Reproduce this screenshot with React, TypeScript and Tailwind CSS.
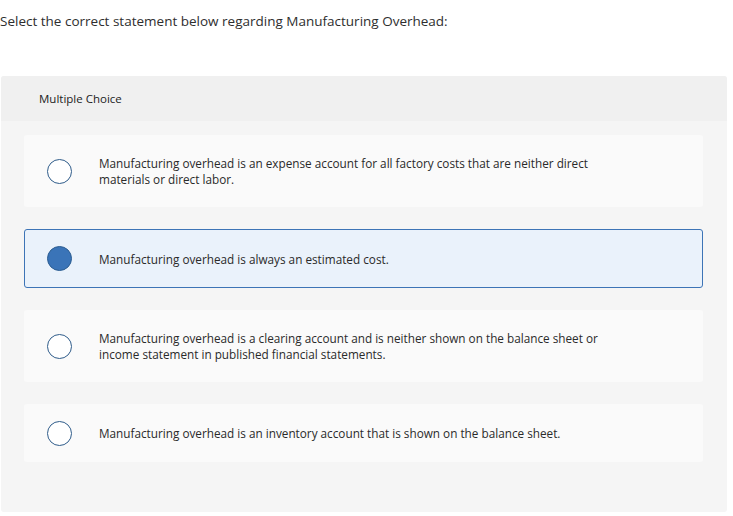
import React from 'react';

const options = [
  'Manufacturing overhead is an expense account for all factory costs that are neither direct materials or direct labor.',
  'Manufacturing overhead is always an estimated cost.',
  'Manufacturing overhead is a clearing account and is neither shown on the balance sheet or income statement in published financial statements.',
  'Manufacturing overhead is an inventory account that is shown on the balance sheet.',
];

const Radio: React.FC<{ checked: boolean }> = ({ checked }) => (
  <span
    className={
      checked
        ? 'block w-[25px] h-[25px] shrink-0 rounded-full border border-[#2c5d91] bg-[#3a74b8]'
        : 'block w-[25px] h-[25px] shrink-0 rounded-full border-[1.5px] border-[#2f5c8a] bg-white'
    }
  />
);

export default function App() {
  const selected = 1;

  return (
    <div className="w-[733px] h-[516px] bg-white font-['Open_Sans',sans-serif] text-[#333]">
      <div className="pt-[11px] h-[76px] text-[13.5px] text-[#2e2e2e]">
        Select the correct statement below regarding Manufacturing Overhead:
      </div>
      <div className="ml-[1px] w-[726px] h-[436px] rounded-[3px] bg-[#f5f5f5] overflow-hidden">
        <div className="h-[45px] bg-[#f0f0f0] pl-[38px] flex items-center text-[11.5px] text-[#222]">
          Multiple Choice
        </div>
        <div className="pt-[14px] pl-[23px] pr-[24px] flex flex-col gap-[22px]">
          {options.map((text, i) => (
            <div
              key={i}
              className={
                i === selected
                  ? 'flex items-center min-h-[59px] pl-[22px] rounded-[3px] border border-[#3d74b6] bg-[#eaf2fb]'
                  : 'flex items-center min-h-[58px] pl-[23px] rounded-[3px] bg-[#fafafa]'
              }
            >
              <Radio checked={i === selected} />
              <p className="ml-[27px] max-w-[520px] py-[20px] text-[11.75px] leading-[16px] text-[#2a2a2a]">{text}</p>
            </div>
          ))}
        </div>
      </div>
    </div>
  );
}
